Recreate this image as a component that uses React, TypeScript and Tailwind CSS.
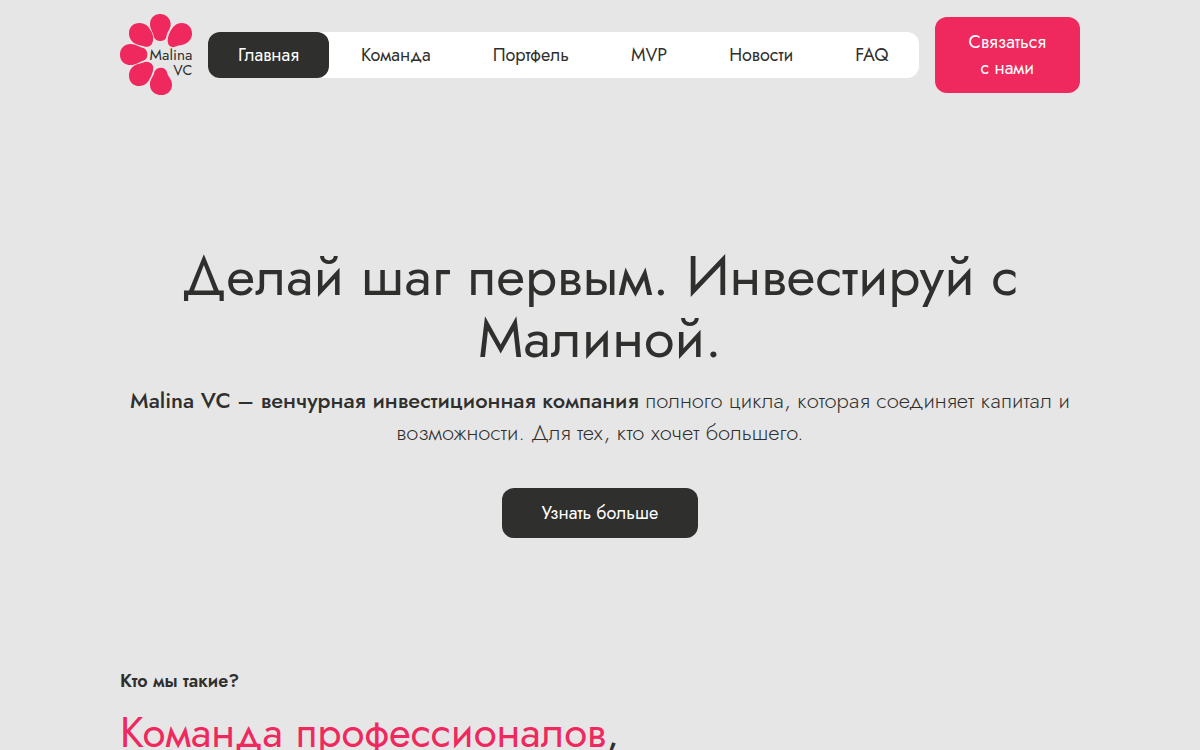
const PETALS = [
  'M150 27C168 27 182 40 182 58C182 74 170 82 169 96C167 104 160 108 151 108C142 108 134 104 132 96C130 82 120 74 120 58C120 40 132 27 150 27Z',
  'M57 84C57 66 70 54 88 54C107 54 116 65 123 78C132 93 131 107 125 118C119 126 109 127 101 124C93 121 86 121 78 117C65 111 57 100 57 84Z',
  'M30 149C30 130 43 117 62 117C78 117 86 126 100 129C108 131 112 140 112 148C112 158 108 165 100 167C86 171 78 180 62 180C43 180 30 168 30 149Z',
  'M57 212C57 196 65 185 78 179C85 175 91 176 98 173C108 168 120 170 126 178C133 187 129 202 122 216C114 232 106 243 88 243C70 243 57 230 57 212Z',
  'M153 188C162 188 169 193 171 202C173 215 186 222 186 239C186 257 172 270 154 270C135 270 120 257 120 239C120 222 131 215 133 202C135 193 143 188 153 188Z',
  'M246 85C246 101 238 111 225 117C215 121 208 120 199 124C191 128 182 127 177 121C171 112 172 97 180 81C188 66 197 54 215 54C233 54 246 67 246 85Z',
];

const LINKS = ['Главная', 'Команда', 'Портфель', 'MVP', 'Новости', 'FAQ'];

function Logo() {
  return (
    <svg
      viewBox="30 27 216 246"
      className="block h-[82px] w-[72px] overflow-visible"
      role="img"
      aria-label="Malina VC"
    >
      <g fill="#ef285d">
        {PETALS.map((d) => (
          <path key={d} d={d} />
        ))}
      </g>
      <g fill="#2f2f2e" textAnchor="end">
        <text x="247" y="165" fontSize="46">Malina</text>
        <text x="247" y="209" fontSize="43">VC</text>
      </g>
    </svg>
  );
}

function Header() {
  return (
    <header className="flex items-center gap-4 pt-[14px]">
      <a href="#home" className="shrink-0">
        <Logo />
      </a>
      <nav className="flex grow justify-between rounded-xl bg-white">
        {LINKS.map((label, index) => (
          <a
            key={label}
            href={`#section-${index}`}
            aria-current={index === 0 ? 'page' : undefined}
            className="rounded-xl px-[30px] py-[10px] text-center text-lg leading-[26px] aria-[current=page]:bg-[#2f2f2e] aria-[current=page]:text-white"
          >
            {label}
          </a>
        ))}
      </nav>
      <a
        href="#contact"
        className="shrink-0 rounded-xl bg-[#ef285d] px-[34px] py-3 text-center text-lg leading-[26px] text-white"
      >
        Связаться
        <br />с нами
      </a>
    </header>
  );
}

export default function App() {
  return (
    <div className="min-h-screen overflow-hidden bg-[#e6e6e6] font-['Jost','Lato',sans-serif] text-[#2f2f2e]">
      <div className="mx-auto max-w-[960px]">
        <Header />
        <main>
          <section className="flex flex-col items-center pt-[149px] text-center">
            <h1 className="text-[56px] leading-[62px]">Делай шаг первым. Инвестируй с Малиной.</h1>
            <p className="mt-[15px] text-[22px] leading-8 font-light">
              <strong className="font-medium">Malina VC – венчурная инвестиционная компания</strong> полного цикла,
              которая соединяет капитал и возможности. Для тех, кто хочет большего.
            </p>
            <button type="button" className="mt-10 rounded-xl bg-[#2f2f2e] px-10 py-3 text-lg leading-[26px] text-white">
              Узнать больше
            </button>
          </section>
          <section className="pt-[130px]">
            <p className="text-lg leading-[26px] font-semibold">Кто мы такие?</p>
            <h2 className="mt-3 text-[42px] leading-[54px]">
              <span className="text-[#ef285d]">Команда профессионалов</span>,
            </h2>
          </section>
        </main>
      </div>
    </div>
  );
}
